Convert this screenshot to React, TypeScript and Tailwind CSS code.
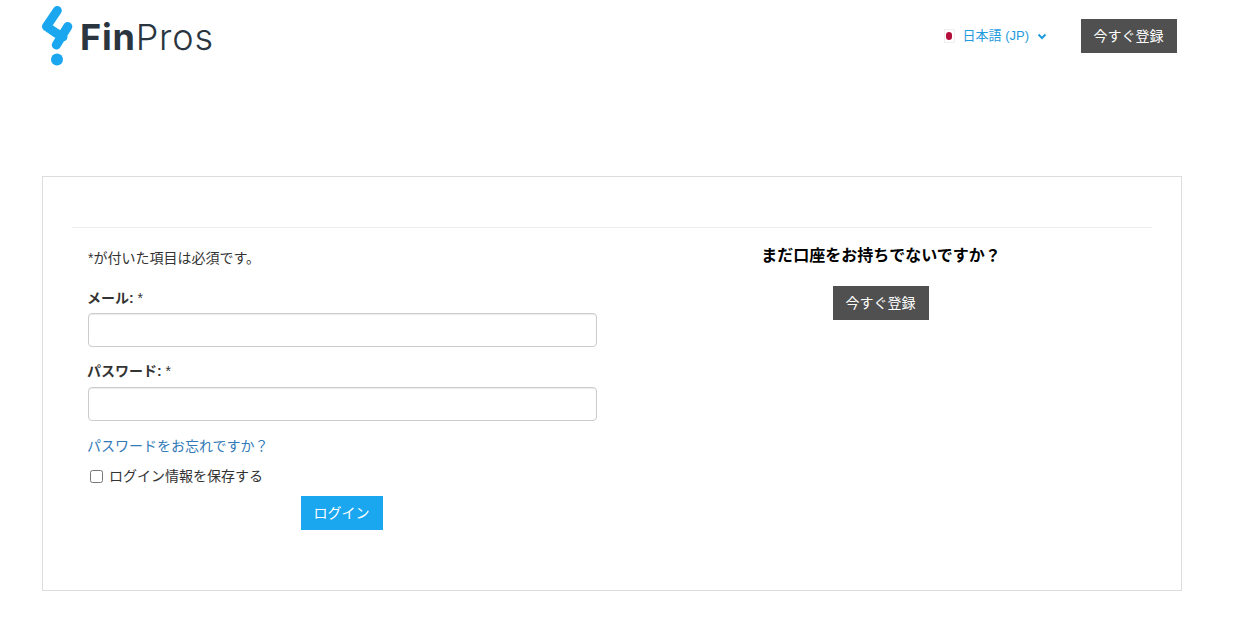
import React from 'react';

const font = "font-['Liberation_Sans','Noto_Sans_CJK_JP',sans-serif]";

function Logo() {
    return (
        <div className="flex items-start">
            <svg width="34" height="62" viewBox="0 0 34 62">
                <path
                    d="M15.3 4.5 L4.5 20.5 L14 27 M25.8 20.5 L14.3 39 M14 27 L21 31"
                    stroke="#1aa7f0"
                    strokeWidth="9"
                    strokeLinecap="round"
                    strokeLinejoin="round"
                    fill="none"
                />
                <circle cx="15" cy="53.5" r="6" fill="#1aa7f0" />
            </svg>
            <div className="ml-[4px] mt-[12px] text-[36px] leading-[38px] text-[#2a3540] font-['Inter',sans-serif] tracking-[0.8px]">
                <span className="font-bold">Fin</span>
                <span className="font-light">Pros</span>
            </div>
        </div>
    );
}

function RegisterButton() {
    return (
        <button className="h-[34px] w-[96px] pr-[1px] bg-[#505050] text-white text-[14px] leading-none">
            今すぐ登録
        </button>
    );
}

export default function App() {
    return (
        <div className={`${font} bg-white min-h-[629px] text-[14px] text-[#333333]`}>
            <header className="h-[72px] pl-[42px] pr-[60px] pt-[6px] flex justify-between">
                <Logo />
                <div className="flex items-center h-[34px] mt-[13px]">
                    <div className="w-[11px] h-[14px] border border-[#eeeeee] flex items-center justify-center">
                        <span className="block w-[6px] h-[8px] rounded-full bg-[#b5103c]" />
                    </div>
                    <span className="ml-[8px] text-[#1f9bde] text-[13px]">日本語 (JP)</span>
                    <svg width="10" height="7" viewBox="0 0 10 7" className="ml-[8px] mr-[34px]">
                        <path d="M1.5 1.5 L5 5 L8.5 1.5" stroke="#1f9bde" strokeWidth="2" fill="none" />
                    </svg>
                    <RegisterButton />
                </div>
            </header>

            <main className="mt-[104px] ml-[42px] w-[1140px] h-[415px] border border-[#dddddd] px-[29px] pt-[50px]">
                <div className="border-t border-[#eeeeee] grid grid-cols-2">
                    <div className="pl-[16px] pr-[15px] pt-[20px]">
                        <p className="leading-[20px]">*が付いた項目は必須です。</p>
                        <label className="block mt-[20px] font-bold leading-[20px] -ml-[1px]">
                            メール: <span className="font-normal">*</span>
                        </label>
                        <input className="block mt-[5px] w-full h-[34px] border border-[#cccccc] rounded-[4px] shadow-[inset_0_1px_1px_rgba(0,0,0,0.075)]" />
                        <label className="block mt-[14px] font-bold leading-[20px] -ml-[1px]">
                            パスワード: <span className="font-normal">*</span>
                        </label>
                        <input type="password" className="block mt-[6px] w-full h-[34px] border border-[#cccccc] rounded-[4px] shadow-[inset_0_1px_1px_rgba(0,0,0,0.075)]" />
                        <a className="block mt-[15px] leading-[20px] text-[#337ab7] -ml-[1px]">パスワードをお忘れですか？</a>
                        <label className="flex items-center mt-[10px] h-[20px] -ml-[1px]">
                            <input type="checkbox" className="ml-[3px] w-[13px] h-[13px]" />
                            <span className="ml-[6px]">ログイン情報を保存する</span>
                        </label>
                        <div className="flex justify-center mt-[10px] -ml-[1px]">
                            <button className="h-[34px] w-[82px] pr-[1px] bg-[#1aa7f0] text-white text-[14px] leading-none">
                                ログイン
                            </button>
                        </div>
                    </div>
                    <div className="flex flex-col items-center pt-[17px] pr-[2px]">
                        <h3 className="text-[16px] font-bold text-black leading-[22px]">まだ口座をお持ちでないですか？</h3>
                        <div className="mt-[19px]">
                            <RegisterButton />
                        </div>
                    </div>
                </div>
            </main>
        </div>
    );
}
